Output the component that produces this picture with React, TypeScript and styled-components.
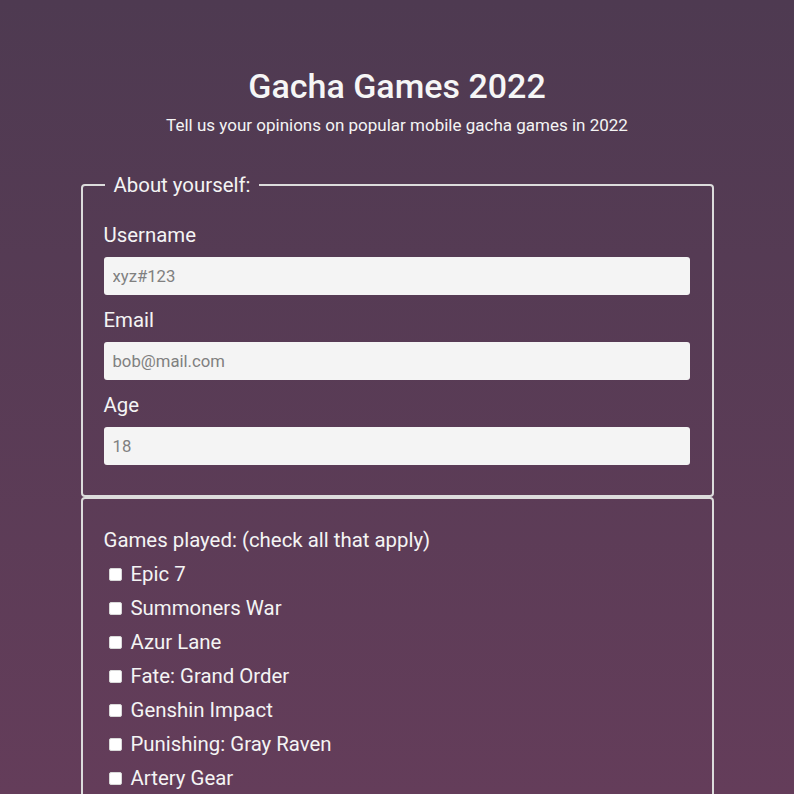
import React from "react";
import styled, { createGlobalStyle } from "styled-components";

const GlobalStyle = createGlobalStyle`
  html, body {
    margin: 0;
    padding: 0;
  }
  body {
    min-height: 100vh;
    background: linear-gradient(180deg, #4e3a51 0%, #643d5a 100%);
    background-attachment: fixed;
    font-family: Roboto, "Liberation Sans", sans-serif;
    color: #f4f4f4;
  }
`;

const Page = styled.main`
  display: flex;
  flex-direction: column;
  align-items: center;
  padding-top: 64px;
`;

const Title = styled.h1`
  margin: 0;
  font-size: 34px;
  line-height: 44px;
  font-weight: 500;
  color: #f6f6f6;
`;

const Subtitle = styled.p`
  margin: 5px 0 0;
  font-size: 17px;
  line-height: 24px;
  color: #f4f4f4;
`;

const Form = styled.form`
  width: 633px;
  margin-top: 36px;
  display: flex;
  flex-direction: column;
`;

const Fieldset = styled.fieldset<{ $pt?: number }>`
  margin: 0;
  border: 2px solid #dcdcdc;
  border-radius: 4px;
  padding: ${(p) => p.$pt ?? 0}px 22px 30px 21px;
  min-width: 0;
`;

const Legend = styled.legend`
  font-size: 20.4px;
  line-height: 24px;
  padding: 0 9px 0 9px;
  margin-left: 1px;
  color: #f4f4f4;
`;

const Label = styled.label`
  display: block;
  font-size: 20.4px;
  line-height: 24px;
  margin-top: 13px;
  margin-bottom: 10px;
  &:first-of-type {
    margin-top: 26px;
  }
`;

const Input = styled.input`
  display: block;
  box-sizing: border-box;
  width: 100%;
  height: 38px;
  border: none;
  border-radius: 3px;
  background: #f4f4f4;
  padding: 0 9px;
  font-family: Roboto, "Liberation Sans", sans-serif;
  font-size: 16.7px;
  color: #333;
  &::placeholder {
    color: #808080;
  }
`;

const GroupTitle = styled.p`
  margin: 0 0 10px;
  font-size: 20.4px;
  line-height: 24px;
`;

const CheckList = styled.div`
  display: flex;
  flex-direction: column;
  gap: 10px;
`;

const CheckRow = styled.label`
  display: flex;
  align-items: center;
  font-size: 20.4px;
  line-height: 24px;
`;

const Check = styled.input`
  appearance: none;
  -webkit-appearance: none;
  width: 13px;
  height: 13px;
  margin: 0 9px 0 5px;
  background: #ffffff;
  border: 1px solid #d8d8d8;
  border-radius: 2px;
  box-sizing: border-box;
`;

const games = [
  "Epic 7",
  "Summoners War",
  "Azur Lane",
  "Fate: Grand Order",
  "Genshin Impact",
  "Punishing: Gray Raven",
  "Artery Gear",
];

export default function App() {
  return (
    <>
      <GlobalStyle />
      <Page>
        <Title>Gacha Games 2022</Title>
        <Subtitle>Tell us your opinions on popular mobile gacha games in 2022</Subtitle>
        <Form>
          <Fieldset>
            <Legend>About yourself:</Legend>
            <Label htmlFor="name">Username</Label>
            <Input id="name" placeholder="xyz#123" />
            <Label htmlFor="email">Email</Label>
            <Input id="email" placeholder="bob@mail.com" />
            <Label htmlFor="age">Age</Label>
            <Input id="age" placeholder="18" />
          </Fieldset>
          <Fieldset $pt={29}>
            <GroupTitle>Games played: (check all that apply)</GroupTitle>
            <CheckList>
              {games.map((g) => (
                <CheckRow key={g}>
                  <Check type="checkbox" />
                  {g}
                </CheckRow>
              ))}
            </CheckList>
          </Fieldset>
        </Form>
      </Page>
    </>
  );
}
